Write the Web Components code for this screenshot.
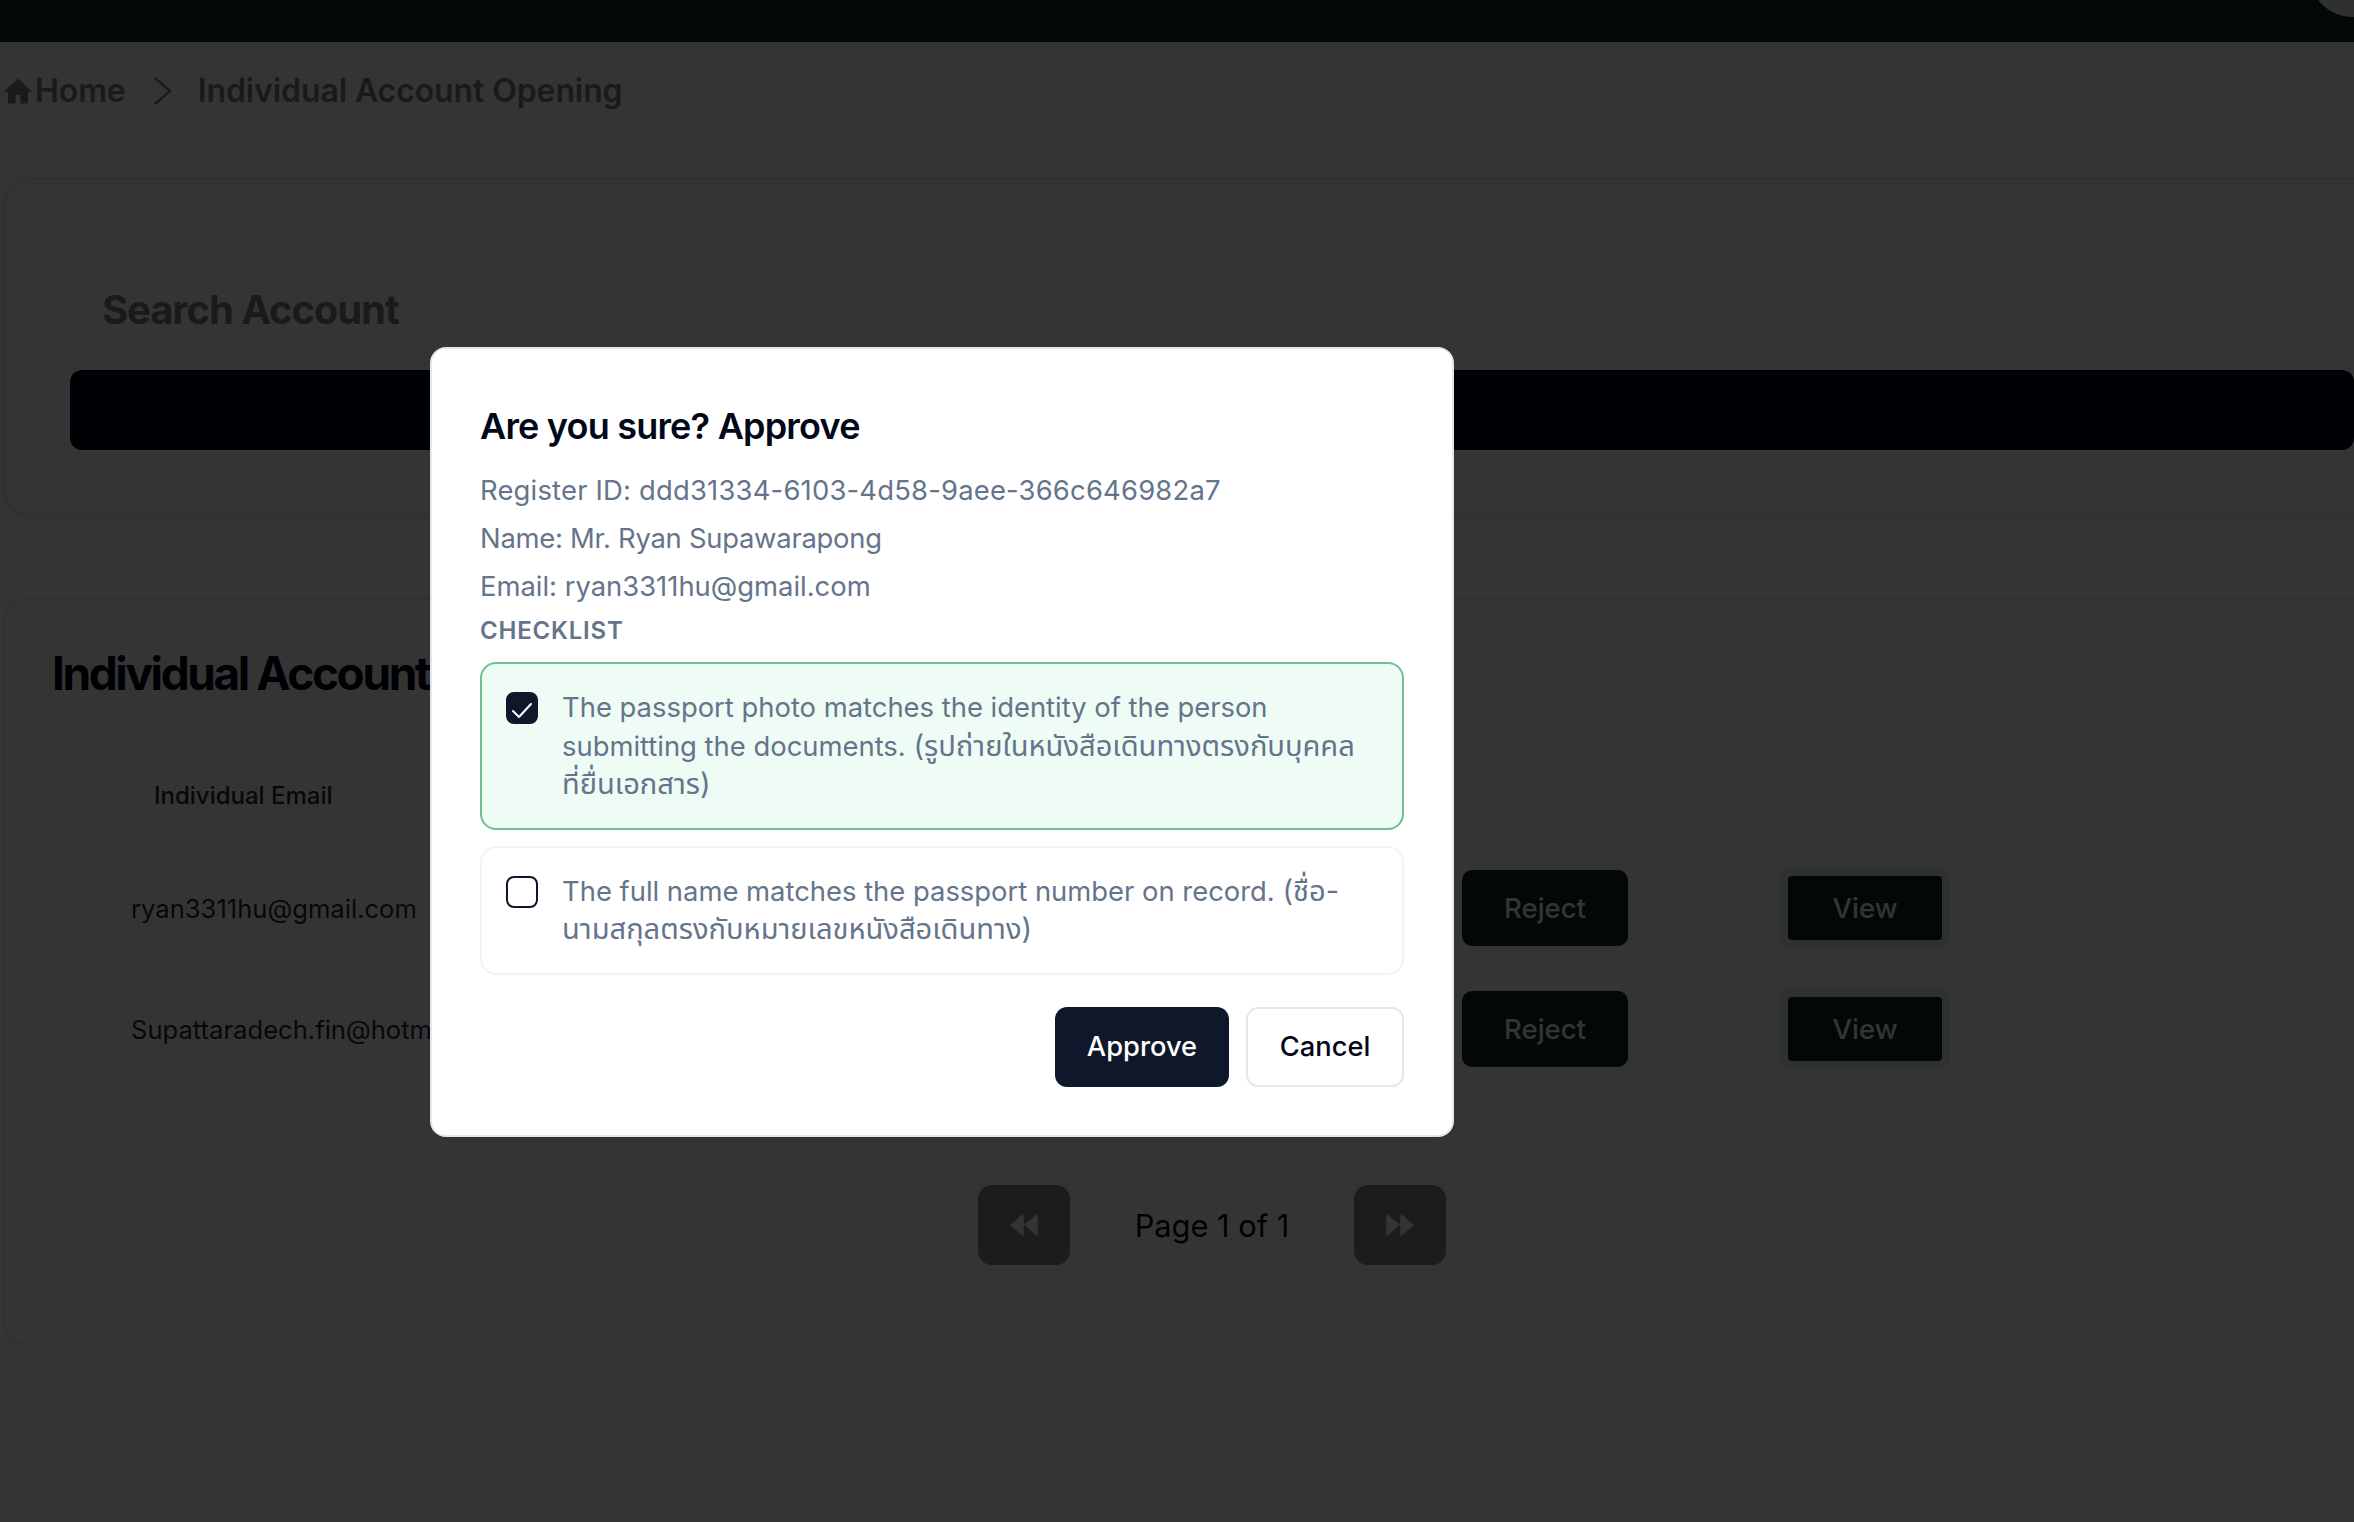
<!DOCTYPE html>
<html lang="en">
<head>
<meta charset="utf-8">
<title>Individual Account Opening</title>
<style>
    html, body { margin: 0; padding: 0; background: #fff; }
    html, body { width: 2354px; height: 1522px; overflow: hidden; }
    body { position: relative; font-family: Inter, "Noto Sans", "Noto Sans Thai", "DejaVu Sans", sans-serif; }
</style>
</head>
<body>
<app-topbar></app-topbar>
<app-breadcrumb current="Individual Account Opening"></app-breadcrumb>
<search-card></search-card>
<accounts-card>
    <account-row email="ryan3311hu@gmail.com"></account-row>
    <account-row email="Supattaradech.fin@hotmail.com"></account-row>
</accounts-card>

<confirm-dialog heading="Are you sure? Approve">
    <p class="id">Register ID: ddd31334-6103-4d58-9aee-366c646982a7</p>
    <p class="name">Name: Mr. Ryan Supawarapong</p>
    <p>Email: ryan3311hu@gmail.com</p>
    <check-item slot="checks" checked>The passport photo matches the identity of the person submitting the documents. <span lang="th">(รูปถ่ายในหนังสือเดินทางตรงกับบุคคลที่ยื่นเอกสาร)</span></check-item>
    <check-item slot="checks">The full name matches the passport number on record. <span lang="th">(ชื่อ-นามสกุลตรงกับหมายเลขหนังสือเดินทาง)</span></check-item>
</confirm-dialog>

<script>
class AppTopbar extends HTMLElement {
    constructor() {
        super();
        this.attachShadow({ mode: "open" }).innerHTML = `
<style>
    :host { display: block; height: 42px; background: #0a2819; position: relative; overflow: hidden; }
    .avatar {
        position: absolute; right: -40px; top: -67px;
        width: 84px; height: 84px; border-radius: 50%; background: #e2e8f0;
    }
</style>
<div class="avatar"></div>`;
    }
}

class AppBreadcrumb extends HTMLElement {
    constructor() {
        super();
        this.attachShadow({ mode: "open" }).innerHTML = `
<style>
    :host {
        display: flex; align-items: center; height: 96px; padding: 2px 0 0 3px; box-sizing: border-box;
        color: #7a7f8c; font-size: 32px; font-weight: 600; line-height: 40px; letter-spacing: -.1px;
    }
    .home { width: 30px; height: 30px; margin-right: 2px; fill: currentColor; }
    .sep { width: 18px; height: 28px; margin: 0 26px 0 28px; fill: none; stroke: currentColor; stroke-width: 2.4; stroke-linecap: round; stroke-linejoin: round; }
</style>
<svg class="home" viewBox="0 0 24 24"><path d="M12 2 L.6 12.6 H4 V22 H10 V15 H14 V22 H20 V12.6 H23.4 Z"/></svg>
<span>Home</span>
<svg class="sep" viewBox="0 0 18 28"><path d="M1.5 1.5 L16 14 L1.5 26.5"/></svg>
<span class="current"></span>`;
    }

    connectedCallback() {
        this.shadowRoot.querySelector(".current").textContent = this.getAttribute("current");
    }
}

class SearchCard extends HTMLElement {
    constructor() {
        super();
        this.attachShadow({ mode: "open" }).innerHTML = `
<style>
    :host {
        display: block; box-sizing: border-box; margin: 40px 0 0 4px; width: 2400px; height: 337px;
        padding: 102px 0 0 64px; border: 2px solid #e2e8f0; border-radius: 24px; background: #fff;
        box-shadow: 0 2px 6px rgba(0,0,0,.08);
    }
    h2 { margin: 0 0 0 32px; color: #7a7f8c; font-size: 40px; line-height: 56px; font-weight: 700; letter-spacing: -1.1px; }
    .bar { margin-top: 32px; width: 2284px; height: 80px; border-radius: 12px; background: #020817; }
</style>
<h2>Search Account</h2>
<div class="bar"></div>`;
    }
}

class AccountRow extends HTMLElement {
    constructor() {
        super();
        this.attachShadow({ mode: "open" }).innerHTML = `
<style>
    :host {
        display: grid; grid-template-columns: 1410px 318px 170px; align-items: center;
        height: 120px; box-sizing: border-box; border-bottom: 2px solid #e2e8f0;
    }
    :host(:last-of-type) { border-bottom: 0; }
    .email { padding-left: 79px; font-size: 25.6px; color: #1e293b; white-space: nowrap; overflow: hidden; }
    button {
        font: 500 27.5px Inter, sans-serif; color: #fff; background: #0a2819; border: 0; padding: 0;
    }
    .reject { width: 166px; height: 76px; border-radius: 10px; }
    .view { width: 154px; height: 64px; border-radius: 4px; margin: 8px; box-shadow: 0 0 0 8px #e2e8f0; }
</style>
<div class="email"></div>
<div><button class="reject">Reject</button></div>
<div><button class="view">View</button></div>`;
    }

    connectedCallback() {
        this.shadowRoot.querySelector(".email").textContent = this.getAttribute("email");
    }
}

class AccountsCard extends HTMLElement {
    constructor() {
        super();
        this.attachShadow({ mode: "open" }).innerHTML = `
<style>
    :host {
        display: block; box-sizing: border-box; margin: 83px 0 0 3px; width: 2400px; height: 747px;
        padding: 45px 0 0 47px; border: 2px solid #e2e8f0; border-radius: 24px; background: #fff;
    }
    h1 { margin: 0; color: #020817; font-size: 46px; line-height: 56px; font-weight: 700; letter-spacing: -2.4px; white-space: nowrap; }
    .head { height: 101px; margin-top: 47px; box-sizing: border-box; border-bottom: 2px solid #e2e8f0; padding: 28px 0 0 102px; font-size: 24px; line-height: 40px; font-weight: 500; color: #1e293b; }
    .pager { display: flex; align-items: center; margin: 96px 0 0 926px; }
    .pager button { width: 92px; height: 80px; border: 0; padding: 0; border-radius: 14px; background: #878b94; display: flex; align-items: center; justify-content: center; }
    .pager svg { width: 28px; height: 22px; fill: #fff; stroke: #fff; stroke-width: 1.5; stroke-linejoin: round; }
    .pager span { width: 284px; text-align: center; font-size: 30.8px; color: #020817; }
</style>
<h1>Individual Account</h1>
<div class="head">Individual Email</div>
<slot></slot>
<div class="pager">
    <button><svg viewBox="0 0 28 22"><path d="M1 11 L13 1 V21 Z M15 11 L27 1 V21 Z"/></svg></button>
    <span>Page 1 of 1</span>
    <button><svg viewBox="0 0 28 22"><path d="M1 1 L13 11 L1 21 Z M15 1 L27 11 L15 21 Z"/></svg></button>
</div>`;
    }
}

class CheckItem extends HTMLElement {
    constructor() {
        super();
        this.attachShadow({ mode: "open" }).innerHTML = `
<style>
    :host {
        display: flex; gap: 24px; box-sizing: border-box; padding: 24px 32px 24px 24px; margin-bottom: 16px;
        border: 2px solid #f1f5f9; border-radius: 16px; background: #fff;
        font-size: 27.4px; line-height: 38.5px; color: #64748b;
    }
    :host([checked]) { border-color: #6ec093; background: #eefcf5; }
    ::slotted(span) { font-size: 29.1px; }
    .box {
        flex: none; box-sizing: border-box; width: 32px; height: 32px; margin-top: 4px;
        border: 2px solid #0f172a; border-radius: 8px; background: #fff;
    }
    :host([checked]) .box { background: #0f172a; }
    svg { display: none; width: 32px; height: 32px; margin: -2px; fill: none; stroke: #fff; stroke-width: 2; stroke-linecap: round; stroke-linejoin: round; }
    :host([checked]) svg { display: block; }
</style>
<div class="box"><svg viewBox="0 0 32 32"><path d="M7 19 L13 25 L25 12"/></svg></div>
<div><slot></slot></div>`;
    }
}

class ConfirmDialog extends HTMLElement {
    constructor() {
        super();
        this.attachShadow({ mode: "open" }).innerHTML = `
<style>
    :host { position: absolute; inset: 0; display: block; background: rgba(0,0,0,.795); }
    .panel {
        position: absolute; left: 430px; top: 347px; width: 1024px; box-sizing: border-box;
        padding: 51px 48px 48px; background: #fff; border: 2px solid #e2e8f0; border-radius: 16px;
        height: 790px;
    }
    h2 { margin: 0 0 14px; font-size: 36px; line-height: 52px; font-weight: 600; color: #020817; letter-spacing: -.8px; }
    .info { font-size: 27.4px; line-height: 48px; color: #64748b; }
    ::slotted(p) { margin: 0; }
    ::slotted(p.id) { letter-spacing: .2px; }
    ::slotted(p.name) { letter-spacing: -.25px; }
    .label { font-size: 24px; line-height: 32px; font-weight: 600; color: #64748b; letter-spacing: .8px; margin: 5px 0 15px; }
    .actions { display: flex; justify-content: flex-end; gap: 17px; margin-top: 32px; }
    button { height: 80px; border-radius: 12px; font: 500 27.3px Inter, sans-serif; padding: 0; }
    .ok { width: 174px; background: #0f172a; color: #fff; border: 0; }
    .no { width: 158px; background: #fff; color: #020817; border: 2px solid #e2e8f0; }
</style>
<div class="panel">
    <h2></h2>
    <div class="info"><slot></slot></div>
    <div class="label">CHECKLIST</div>
    <slot name="checks"></slot>
    <div class="actions">
        <button class="ok">Approve</button>
        <button class="no">Cancel</button>
    </div>
</div>`;
    }

    connectedCallback() {
        this.shadowRoot.querySelector("h2").textContent = this.getAttribute("heading");
    }
}

customElements.define("app-topbar", AppTopbar);
customElements.define("app-breadcrumb", AppBreadcrumb);
customElements.define("search-card", SearchCard);
customElements.define("account-row", AccountRow);
customElements.define("accounts-card", AccountsCard);
customElements.define("check-item", CheckItem);
customElements.define("confirm-dialog", ConfirmDialog);
</script>
</body>
</html>
